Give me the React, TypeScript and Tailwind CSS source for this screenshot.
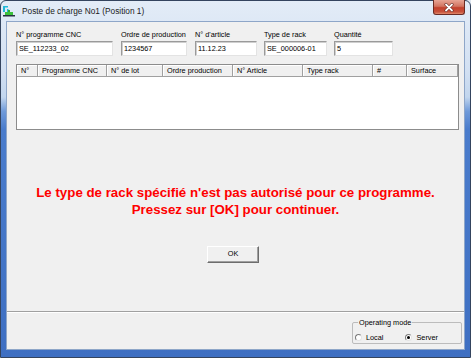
import React from "react";

function Field({ label, value, wrap, input }: { label: string; value: string; wrap: string; input: string }) {
  return (
    <div className={`${wrap} flex flex-col`}>
      <div className="h-[9px] leading-[9px] text-[7.3px] text-black whitespace-nowrap">{label}</div>
      <div
        className={`${input} mt-[2px] h-[15px] bg-white border border-t-[#9a9a9a] border-l-[#9a9a9a] border-b-[#e3e3e3] border-r-[#e3e3e3] shadow-[inset_1px_1px_0_#cfcfcf] flex items-center pl-[2px] text-[7.3px] leading-[9px] text-black whitespace-nowrap overflow-hidden`}
      >
        {value}
      </div>
    </div>
  );
}

function Radio({ checked }: { checked?: boolean }) {
  return (
    <div className="w-[7px] h-[7px] rounded-full bg-white border border-t-[#7a7a7a] border-l-[#7a7a7a] border-b-[#e4e4e4] border-r-[#e4e4e4] flex items-center justify-center">
      {checked ? <div className="w-[3px] h-[3px] rounded-full bg-black" /> : null}
    </div>
  );
}

export default function App() {
  const cols: { t: string; w: string }[] = [
    { t: "N°", w: "w-[21px]" },
    { t: "Programme CNC", w: "w-[69px]" },
    { t: "N° de lot", w: "w-[56px]" },
    { t: "Ordre production", w: "w-[70px]" },
    { t: "N° Article", w: "w-[70px]" },
    { t: "Type rack", w: "w-[70px]" },
    { t: "#", w: "w-[34px]" },
    { t: "Surface", w: "w-[51px]" },
  ];

  return (
    <div className="w-[471px] h-[358px] bg-[#dfe7f1] font-['Liberation_Sans',Arial,sans-serif] overflow-hidden">
      <div className="w-[471px] h-[358px] rounded-t-[6px] border border-[#34445e] bg-[linear-gradient(180deg,#e3ecf7_0%,#d2e0f2_20%,#c2d6ee_27%,#6f9ad9_31%,#4a7ccc_36%,#3e6fc2_100%)] flex flex-col">
        {/* Title bar */}
        <div className="h-[20px] flex items-start justify-between pl-[1px] pr-[5px] shrink-0">
          <div className="flex items-center h-[19px]">
            <svg width="14" height="13" viewBox="0 0 14 13" className="mt-[1px]">
              <rect x="1" y="1" width="2" height="6" fill="#22b8d8" />
              <rect x="3" y="1" width="3" height="1.5" fill="#22b8d8" />
              <rect x="5" y="4" width="1.5" height="3" fill="#22b8d8" />
              <rect x="3" y="7" width="8" height="3" fill="#3cc23c" />
              <rect x="6" y="5" width="2" height="2" fill="#2fa82f" />
              <rect x="1" y="10" width="12" height="1.5" fill="#26323f" />
            </svg>
            <span className="ml-[6px] text-[8.3px] leading-[10px] text-[#1b1b1b] whitespace-nowrap">
              Poste de charge No1 (Position 1)
            </span>
          </div>
          <div className="w-[32px] h-[15px] -mt-[1px] rounded-b-[3px] border border-t-0 border-[#6b2b23] bg-[linear-gradient(180deg,#e7a595_0%,#d27460_45%,#c2402c_55%,#c9533c_85%,#e08a6c_100%)] flex items-center justify-center">
            <svg width="10" height="9" viewBox="0 0 10 9">
              <path d="M2 1.5 L8 7.5 M8 1.5 L2 7.5" stroke="#5a1e16" strokeWidth="3" strokeLinecap="round" />
              <path d="M2 1.5 L8 7.5 M8 1.5 L2 7.5" stroke="#ffffff" strokeWidth="1.8" strokeLinecap="round" />
            </svg>
          </div>
        </div>

        {/* Client area */}
        <div className="mx-[5px] h-[329px] bg-[#f0f0f0] border border-[#8ea6c8] flex flex-col">
          <div className="h-[289px] pl-[9px] pt-[8px] flex flex-col">
            <div className="flex gap-[7px]">
              <Field label="N° programme CNC" value="SE_112233_02" wrap="w-[98px]" input="w-[97px]" />
              <Field label="Ordre de production" value="1234567" wrap="w-[67px]" input="w-[66px]" />
              <Field label="N° d'article" value="11.12.23" wrap="w-[62px]" input="w-[62px]" />
              <Field label="Type de rack" value="SE_000006-01" wrap="w-[63px]" input="w-[63px]" />
              <Field label="Quantité" value="5" wrap="w-[59px]" input="w-[59px]" />
            </div>

            {/* Table */}
            <div className="mt-[8px] w-[443px] h-[66px] border border-[#8c8c8c] bg-white flex flex-col">
              <div className="h-[12px] flex bg-[#f0f0f0]">
                {cols.map((c) => (
                  <div
                    key={c.t}
                    className={`${c.w} h-[12px] border-r border-b border-[#a0a0a0] shadow-[inset_1px_1px_0_#ffffff] pl-[4px] flex items-center text-[7.3px] leading-[9px] text-black whitespace-nowrap overflow-hidden`}
                  >
                    {c.t}
                  </div>
                ))}
              </div>
            </div>

            {/* Message */}
            <div className="mt-[54px] -ml-[9px] text-center text-[#ff0000] font-bold text-[13.3px] leading-[17px]">
              <div>Le type de rack spécifié n'est pas autorisé pour ce programme.</div>
              <div>Pressez sur [OK] pour continuer.</div>
            </div>

            {/* OK button */}
            <div className="mt-[28px] -ml-[9px] flex justify-center">
              <div className="ml-[-5px] w-[52px] h-[17px] bg-[#f0f0f0] border border-t-[#ffffff] border-l-[#ffffff] border-b-[#6d6d6d] border-r-[#6d6d6d] shadow-[inset_-1px_-1px_0_#a0a0a0] flex items-center justify-center text-[7.3px] text-black">
                OK
              </div>
            </div>
          </div>

          {/* Separator */}
          <div className="h-[2px] border-t border-[#a0a0a0] bg-white" />

          {/* Bottom area */}
          <div className="flex-1 flex justify-end pr-[2px] pt-[9px]">
            <div className="relative w-[110px] h-[22px] border border-[#bcbcbc] rounded-[2px]">
              <div className="absolute left-[5px] -top-[5px] px-[1px] bg-[#f0f0f0] text-[7.3px] leading-[9px] text-black whitespace-nowrap">
                Operating mode
              </div>
              <div className="flex items-center h-full pt-[9px] pl-[2px]">
                <Radio />
                <span className="ml-[4px] text-[7.3px] leading-[9px] text-black">Local</span>
                <div className="ml-[22px]">
                  <Radio checked />
                </div>
                <span className="ml-[4px] text-[7.3px] leading-[9px] text-black">Server</span>
              </div>
            </div>
          </div>
        </div>
      </div>
    </div>
  );
}
